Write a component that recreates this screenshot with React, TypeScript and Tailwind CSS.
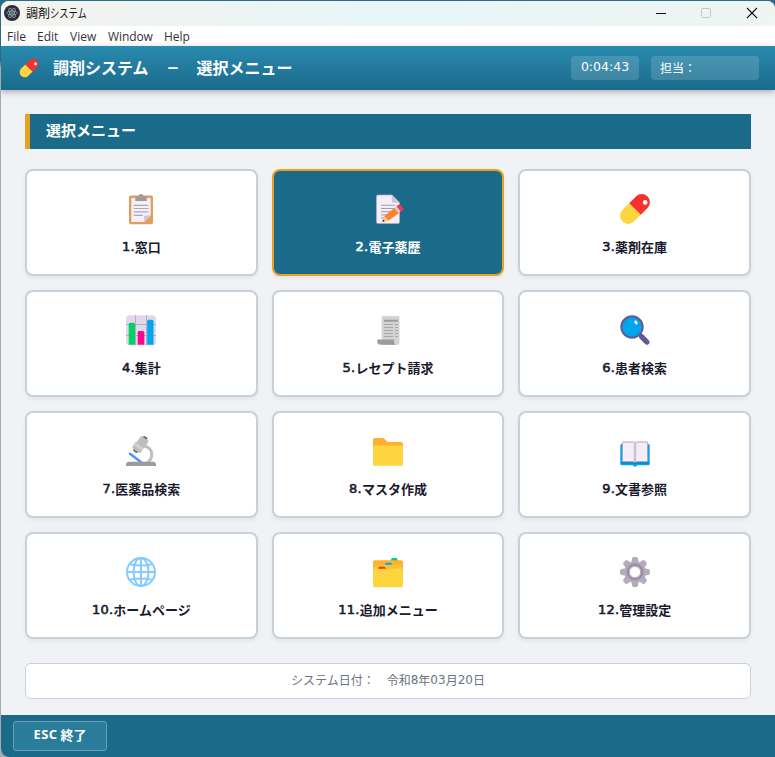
import React from "react";

const jp = "font-['Noto_Sans_CJK_JP',sans-serif]";

function Svg({ children, className = "h-8 w-8" }: { children: React.ReactNode; className?: string }) {
  return (
    <svg viewBox="0 0 32 32" fill="none" className={`shrink-0 ${className}`}>
      {children}
    </svg>
  );
}

function Pill({ className }: { className?: string }) {
  return (
    <Svg className={className}>
      <g transform="rotate(45 16 16)">
        <path d="M7.8 16h16.4v9.6a8.2 8.2 0 0 1-16.4 0Z" fill="#FCD53F" />
        <path d="M7.8 16V6.4a8.2 8.2 0 0 1 16.4 0V16Z" fill="#F8312F" />
      </g>
      <circle cx="26.2" cy="9.4" r="2.3" fill="#fff" />
    </Svg>
  );
}

const Clipboard = () => (
  <Svg>
    <rect x="4" y="2.5" width="24" height="28.8" rx="2" fill="#E39D54" />
    <path d="M6.300 5h19.400v17.500l-6.500 6.500H6.300Z" fill="#F4EFF8" />
    <path d="M25.700 22.500l-6.500 6.500v-5.500a1 1 0 0 1 1-1Z" fill="#CDC4D6" />
    <path d="M10.300 6.500V5a1.500 1.500 0 0 1 1.500-1.500h1.700a2.500 2.500 0 0 1 5 0h1.700A1.500 1.500 0 0 1 21.700 5v3H10.300Z" fill="#9B9B9B" />
    <circle cx="16" cy="3.500" r="1" fill="#E39D54" />
    <path d="M8.700 12.300h14.600M8.700 15.500h14.600M8.700 18.900h14.600M8.700 22.300h9" stroke="#ABA8B0" strokeWidth="1.200" />
  </Svg>
);

const Memo = () => (
  <Svg>
    <path d="M6 1.500h14l8 8V29a2 2 0 0 1-2 2H6a2 2 0 0 1-2-2V3.500a2 2 0 0 1 2-2Z" fill="#998EA4" />
    <path d="M6 2.200h13.700l7.600 7.600V29a1.300 1.300 0 0 1-1.300 1.300H6A1.300 1.300 0 0 1 4.700 29V3.500A1.300 1.300 0 0 1 6 2.200Z" fill="#F3EEF8" />
    <path d="M19.700 1.800v6a2 2 0 0 0 2 2h6Z" fill="#CDC4D6" />
    <path d="M9 12.300h14M9 15.500h14M9 18.700h10M9 21.900h6M9 25h4" stroke="#A59BB0" strokeWidth="1" />
    <path d="m10.300 28.900 1.900-5.900 11-8.600 4.500 5-11 8Z" fill="#FF822D" />
    <path d="m10.300 28.900 1.900-5.900 4.500 4.400Z" fill="#FFCE7C" />
    <path d="m10.300 28.900.8-2.500 1.700 1.700Z" fill="#402A32" />
    <path d="m22.300 15.100 2.200-1.800 4.300 4.800-2.200 1.800Z" fill="#D3D3D3" />
    <path d="m24.500 13.300 1.400-1.200a2.200 2.200 0 0 1 3 .3l2 2.300a2 2 0 0 1-.3 2.900l-1.600 1.300Z" fill="#F8315F" />
  </Svg>
);

const Chart = () => (
  <Svg>
    <rect x="1" y="1.300" width="30" height="30" rx="4" fill="#E1D8EC" />
    <path d="M10.500 1.300v30M21.500 1.300v30M1 10.500h30M1 21.500h30" stroke="#B4ACBC" strokeWidth="1" />
    <path d="M3.700 10.300a1.500 1.500 0 0 1 1.500-1.500h3.300a1.500 1.500 0 0 1 1.500 1.500v20.500H3.700Z" fill="#00D26A" />
    <path d="M12.700 18.600a1.500 1.500 0 0 1 1.500-1.500h3.600a1.500 1.500 0 0 1 1.500 1.500v12.200h-6.600Z" fill="#F70A8D" />
    <path d="M22.200 7.300a1.500 1.500 0 0 1 1.500-1.500H27a1.500 1.500 0 0 1 1.500 1.500v23.500h-6.300Z" fill="#00A6ED" />
  </Svg>
);

const Receipt = () => (
  <Svg>
    <path d="m9.700 1.500 1.500 1 1.500-1 1.500 1 1.500-1 1.600 1 1.500-1 1.500 1 1.500-1 1.600 1 1.500-1 1.300 1 1.300-1V28a3 3 0 0 1-3 3H12.700a3 3 0 0 1-3-3Z" fill="#D3D3D3" />
    <path d="M12 6.700h14" stroke="#9B9B9B" strokeWidth="2" />
    <path d="M12 10.500h9M23 10.500h3M12 13.500h9M23 13.500h3M12 16.500h9M23 16.500h3M12 19.500h9M23 19.500h3M12 22.500h9M23 22.500h3" stroke="#A8A8A8" strokeWidth="1.100" />
    <path d="M5.300 26.200a.8.800 0 0 1 .8-.8h16.500c-1 1.200-.7 4.600 1.600 5.400H8.800a3.500 3.500 0 0 1-3.500-3.500Z" fill="#9B9B9B" />
  </Svg>
);

const Magnifier = () => (
  <Svg>
    <path d="m20 19 3 3" stroke="#635994" strokeWidth="3" />
    <path d="m22.800 22.800 5 5.200" stroke="#635994" strokeWidth="5.400" strokeLinecap="round" />
    <circle cx="13" cy="13" r="10.700" fill="#00A6ED" stroke="#635994" strokeWidth="2" />
    <ellipse cx="17" cy="8.500" rx="1.400" ry="2.200" transform="rotate(-32 17 8.500)" fill="#fff" />
  </Svg>
);

const Microscope = () => (
  <Svg>
    <path d="M18 11.300c5.500-.8 8.800 3.700 8.800 8.200 0 3.500-1.500 6-4.300 7.800" stroke="#BEBEBE" strokeWidth="3" />
    <path d="m5 18.800 11.500 8.700" stroke="#4F92FF" strokeWidth="2.500" strokeLinecap="round" />
    <path d="M1 31v-1.200a3 3 0 0 1 3-3h24a3 3 0 0 1 3 3V31Z" fill="#9B9B9B" />
    <g transform="rotate(33 16 9)">
      <rect x="13.700" y=".4" width="5" height="4" rx="1.200" fill="#636363" />
      <rect x="12.700" y="15" width="5" height="4" rx="1.200" fill="#636363" />
      <path d="M11.500 3.500A1.500 1.500 0 0 1 13 2h6.500A1.500 1.500 0 0 1 21 3.500V11h-9.500Z" fill="#BEBEBE" />
      <path d="M10.300 10h10.200v5.500a2 2 0 0 1-2 2h-6.200a2 2 0 0 1-2-2Z" fill="#BEBEBE" />
      <path d="M10.300 11h10.200v3H10.300Z" fill="#D3D3D3" />
    </g>
  </Svg>
);

const Folder = () => (
  <Svg>
    <path d="M1 4.800A1.800 1.800 0 0 1 2.800 3h7.700c.7 0 1.300.2 1.800.7l2.900 2.700c.4.400 1 .6 1.500.6H29a2 2 0 0 1 2 2v4H1Z" fill="#FFB02E" />
    <path d="M1 12.300a1.800 1.800 0 0 1 1.800-1.800h26.400a1.800 1.800 0 0 1 1.800 1.800v17a1.500 1.500 0 0 1-1.500 1.500h-27A1.500 1.500 0 0 1 1 29.300Z" fill="#FCD53F" />
  </Svg>
);

const Book = () => (
  <Svg>
    <path d="M1.300 10.500A1.500 1.500 0 0 1 2.800 9h26.400a1.500 1.500 0 0 1 1.500 1.500v18.300a1.500 1.500 0 0 1-1.500 1.500H18l-.8 1.200h-2.400l-.8-1.200H2.800a1.500 1.500 0 0 1-1.500-1.500Z" fill="#00A6ED" />
    <path d="M2 28h12.500l1.500 1 1.500-1H30" stroke="#0074BA" strokeWidth="1" />
    <path d="M3.300 8a1 1 0 0 1 1-1h9.500c1 0 2.200.7 2.200 1.500 0-.8 1.200-1.500 2.200-1.500h9.500a1 1 0 0 1 1 1v18.700H18.500c-1.200 0-2 .4-2.500 1-.5-.6-1.300-1-2.500-1H3.300Z" fill="#F3EEF8" stroke="#998EA4" strokeWidth=".8" />
    <path d="M16 8.500v19" stroke="#998EA4" strokeWidth="1" />
    <path d="M14.900 8.500v18M17.100 8.500v18" stroke="#D8D0E0" strokeWidth=".6" />
  </Svg>
);

const Globe = () => (
  <Svg>
    <g stroke="#83CBFF" strokeWidth="2">
      <circle cx="16" cy="16" r="14" />
      <ellipse cx="16" cy="16" rx="7.500" ry="14" />
      <path d="M16 2v28M2 16h28M5 8.300c6 1.400 16 1.400 22 0M5 23.700c6-1.400 16-1.400 22 0" />
    </g>
  </Svg>
);

const Dividers = () => (
  <Svg>
    <path d="m18.500 5 .8-2a1.500 1.500 0 0 1 1.400-1h3.200a1.500 1.500 0 0 1 1.400 1l.8 2Z" fill="#00D26A" />
    <rect x="1" y="4.200" width="30" height="20" rx="2" fill="#FFB02E" />
    <path d="M1 10.500 3 8.600h26l2 1.900V15H1Z" fill="#FCC12F" />
    <path d="m12.800 8.700.7-1.300a1.300 1.300 0 0 1 1.100-.7h4a1.300 1.300 0 0 1 1.100.7l.7 1.300Z" fill="#00A6ED" />
    <path d="M1 14.300a1.800 1.800 0 0 1 1.800-1.800h26.400a1.800 1.800 0 0 1 1.800 1.800v14.900a2 2 0 0 1-2 2H3a2 2 0 0 1-2-2Z" fill="#FCD53F" />
    <path d="m6 12.800.7-1.300a1.300 1.300 0 0 1 1.100-.7h4.400a1.300 1.300 0 0 1 1.100.7l.7 1.300Z" fill="#F8312F" />
  </Svg>
);

const Gear = () => (
  <Svg>
    <g fill="#B4ACBC">
      {[0, 45, 90, 135].map((a) => (
        <path key={a} transform={`rotate(${a} 16 16)`} d="M12.600 5 13.200 2.300A1.600 1.600 0 0 1 14.800 1.100h2.400a1.600 1.600 0 0 1 1.600 1.200L19.400 5v22l-.6 2.700a1.600 1.600 0 0 1-1.600 1.200h-2.400a1.600 1.600 0 0 1-1.600-1.200L12.600 27Z" />
      ))}
      <circle cx="16" cy="16" r="10.800" />
    </g>
    <circle cx="16" cy="16" r="7.200" fill="#fff" stroke="#998EA4" strokeWidth="2.400" />
    <circle cx="16" cy="16" r="5.600" stroke="#B4ACBC" strokeWidth="1" />
  </Svg>
);

const items: [string, string, () => React.ReactElement][] = [
  ["1.", "窓口", Clipboard],
  ["2.", "電子薬歴", Memo],
  ["3.", "薬剤在庫", () => <Pill className="h-8 w-8" />],
  ["4.", "集計", Chart],
  ["5.", "レセプト請求", Receipt],
  ["6.", "患者検索", Magnifier],
  ["7.", "医薬品検索", Microscope],
  ["8.", "マスタ作成", Folder],
  ["9.", "文書参照", Book],
  ["10.", "ホームページ", Globe],
  ["11.", "追加メニュー", Dividers],
  ["12.", "管理設定", Gear],
];

function Card({ item, selected }: { item: (typeof items)[number]; selected: boolean }) {
  const [num, label, Icon] = item;
  return (
    <button
      className={`flex h-[107px] flex-col items-center rounded-lg border-2 pt-[21.5px] shadow-[0_2px_4px_rgba(0,0,0,0.06)] ${
        selected ? "border-[#e8a020] bg-[#1a6b8a] text-white" : "border-[#c8d0d8] bg-white text-[#1a1a2e]"
      }`}
    >
      <Icon />
      <span className="mt-3 flex h-5 items-center whitespace-nowrap text-[13px] leading-5">
        <span className="font-['DejaVu_Sans',sans-serif] tracking-[0.2px] [-webkit-text-stroke:0.6px_currentColor]">{num}</span>
        <span className={`font-bold ${jp}`}>{label}</span>
      </span>
    </button>
  );
}

function TitleBar() {
  return (
    <div className="flex h-[25px] shrink-0 items-center bg-linear-to-r from-[#f4f3ee] via-[#e8f6f8] to-[#eef5f2] pb-px pl-[3px]">
      <svg viewBox="0 0 16 16" className="h-4 w-4" fill="none">
        <circle cx="8" cy="8" r="8" fill="#2b2e3a" />
        <g stroke="#b4ccd6" strokeWidth=".7" opacity=".85">
          <ellipse cx="8" cy="8" rx="5.300" ry="2" />
          <ellipse cx="8" cy="8" rx="5.300" ry="2" transform="rotate(60 8 8)" />
          <ellipse cx="8" cy="8" rx="5.300" ry="2" transform="rotate(120 8 8)" />
        </g>
        <circle cx="8" cy="8" r=".8" fill="#b4ccd6" />
      </svg>
      <div className={`ml-1.5 flex items-center whitespace-nowrap text-xs text-[#111] ${jp}`}>
        <span>調剤</span>
        <span className="origin-left scale-x-[0.77]">システム</span>
      </div>
      <svg viewBox="0 0 110 12" className="mr-[13px] ml-auto h-3 w-[110px]" fill="none">
        <path d="M4 6.500h10" stroke="#111" />
        <rect x="49.500" y="1.500" width="9" height="9" rx="1" stroke="#c2c6c6" />
        <path d="m95 1 10 10M105 1 95 11" stroke="#111" strokeWidth="1.100" />
      </svg>
    </div>
  );
}

export default function App() {
  return (
    <div className="h-[757px] w-[775px] overflow-hidden bg-linear-to-b from-[#2b6c89] from-[8%] to-[#aaa] to-[9%] pt-px pl-px">
      <div className="flex h-[756px] flex-col overflow-hidden rounded-t-lg rounded-bl-lg bg-[#f0f2f5]">
        <TitleBar />
        <nav className="flex h-5 shrink-0 items-center bg-white pt-0.5 pl-1.5 font-['Open_Sans',sans-serif] text-xs text-[#333]">
          <span className="w-[30px]">File</span>
          <span className="w-[33px]">Edit</span>
          <span className="w-[38px]">View</span>
          <span className="w-14 tracking-[-0.1px]">Window</span>
          <span>Help</span>
        </nav>
        <header className="z-10 flex h-11 shrink-0 items-center bg-linear-to-b from-[#2a8ab0] to-[#1a6b8a] pr-4 pl-[18px] text-white shadow-[0_2px_6px_rgba(0,0,0,0.3)]">
          <Pill className="h-5 w-5" />
          <h1 className={`ml-3.5 flex whitespace-pre pb-0.5 text-base font-bold ${jp}`}>
            <span>調剤システム　</span>
            <span className="w-4 origin-center scale-x-115 text-center">−</span>
            <span>　選択メニュー</span>
          </h1>
          <div className="ml-auto flex h-6 w-[68px] items-center justify-center rounded bg-white/15 pb-px font-['DejaVu_Sans',sans-serif] text-[12.5px]">0:04:43</div>
          <div className={`ml-3 flex h-6 w-[108px] items-center rounded bg-white/15 pb-px pl-[9px] text-xs ${jp}`}>担当：</div>
        </header>
        <main className="flex flex-1 flex-col bg-[#f0f2f5] px-6 pt-6">
          <h2 className={`flex h-[35px] w-[726px] items-center border-l-[5px] border-[#e8a020] bg-[#1a6b8a] pb-0.5 pl-4 text-[15px] font-bold text-white ${jp}`}>選択メニュー</h2>
          <div className="mt-5 grid w-[726px] grid-cols-3 gap-3.5">
            {items.map((item, i) => (
              <Card key={item[0]} item={item} selected={i === 1} />
            ))}
          </div>
          <div className={`mt-6 flex h-9 w-[726px] items-center justify-center whitespace-pre rounded-md border border-[#c8d0d8] bg-white pb-0.5 text-xs text-[#6b7280] ${jp}`}>
            システム日付：　令和<span className="font-['DejaVu_Sans',sans-serif]">8</span>年<span className="font-['DejaVu_Sans',sans-serif]">03</span>月<span className="font-['DejaVu_Sans',sans-serif]">20</span>日
          </div>
        </main>
        <footer className="flex h-[42px] shrink-0 items-start bg-[#1a6b8a] pt-1.5 pl-3">
          <button className={`flex h-[30px] w-[94px] items-center justify-center gap-[3px] rounded-[3px] border border-[#6ba0b6] bg-[#2a7c9b] pb-0.5 text-[13px] font-bold text-white ${jp}`}>
            <span className="font-['Noto_Sans',sans-serif] tracking-[0.4px]">ESC</span>
            <span>終了</span>
          </button>
        </footer>
      </div>
    </div>
  );
}
